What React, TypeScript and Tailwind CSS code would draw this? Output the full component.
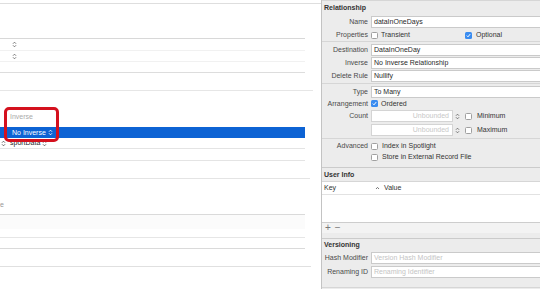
import React from "react";

function Stepper({ className = "" }: { className?: string }) {
  return (
    <svg width="5" height="7" viewBox="0 0 5 7" className={className} fill="none" stroke="currentColor" strokeWidth="0.9">
      <path d="M1 2.7 L2.5 1.2 L4 2.7" />
      <path d="M1 4.3 L2.5 5.8 L4 4.3" />
    </svg>
  );
}

function Check({ checked = false }: { checked?: boolean }) {
  if (checked) {
    return (
      <span className="w-[7px] h-[7px] rounded-[1.5px] bg-[#3a8cf0] flex items-center justify-center shrink-0">
        <svg width="5" height="5" viewBox="0 0 5 5">
          <path d="M0.8 2.6 L2 3.8 L4.2 1.1" stroke="white" strokeWidth="1" fill="none" />
        </svg>
      </span>
    );
  }
  return <span className="w-[7px] h-[7px] rounded-[1.5px] border border-[#a0a0a0] bg-white shrink-0" />;
}

function Row({ h, label, children }: { h: string; label?: string; children?: React.ReactNode }) {
  return (
    <div className={`flex items-center ${h}`}>
      <div className="w-[46px] text-right text-[#4a4a4a] shrink-0 whitespace-nowrap">{label}</div>
      <div className="ml-[3px] flex items-center">{children}</div>
    </div>
  );
}

function Field({ children, placeholder = false }: { children?: React.ReactNode; placeholder?: boolean }) {
  return (
    <div
      className={`w-[180px] h-[12px] bg-white border border-[#cacaca] flex items-center pl-[2px] whitespace-nowrap ${
        placeholder ? "text-[#c4c4c4]" : "text-[#2a2a2a]"
      }`}
    >
      {children}
    </div>
  );
}

function Sep({ dark = false }: { dark?: boolean }) {
  return <div className={`h-[1px] shrink-0 ${dark ? "bg-[#cbcbcb]" : "bg-[#d6d6d6]"}`} />;
}

function LeftPanel() {
  return (
    <div className="w-[321px] shrink-0 bg-white relative flex flex-col text-[#333]">
      <div className="h-[3px]" />
      <div className="h-[1px] bg-[#dedede]" />
      <div className="h-[34px]" />
      <div className="h-[1px] w-[305px] bg-[#d8d8d8]" />
      <div className="h-[12px] w-[305px] border-b border-[#f1f1f1] flex items-center pl-[12px] text-[#666]">
        <Stepper />
      </div>
      <div className="h-[11px] w-[305px] border-b border-[#f1f1f1] flex items-center pl-[12px] text-[#666]">
        <Stepper />
      </div>
      <div className="h-[11px] w-[305px] border-b border-[#dddddd]" />
      <div className="h-[18px] w-[313px] border-b border-[#e6e6e6]" />
      <div className="h-[36px]" />
      <div className="h-[11px] w-[305px] bg-[#0d63d4] flex items-center pl-[12px] text-white">
        <span>No Inverse</span>
        <Stepper className="ml-[2px] text-white" />
      </div>
      <div className="h-[11px] w-[305px] border-b border-[#e4e4e4] flex items-center text-[#222]">
        <Stepper className="ml-[1px] text-[#555]" />
        <span className="ml-[4px]">sportData</span>
        <Stepper className="ml-[2px] text-[#555]" />
      </div>
      <div className="h-[12px] w-[305px] border-b border-[#e4e4e4]" />
      <div className="h-[18px] w-[310px] border-b border-[#e4e4e4]" />
      <div className="h-[36px] w-[305px] border-b border-[#dadada] pt-[22px] text-[#999]">
        <span>e</span>
      </div>
      <div className="h-[14px] w-[305px] bg-[#fbfbfb]" />
      <div className="h-[9px] w-[305px] border-b border-[#e6e6e6]" />
      <div className="h-[11px] w-[305px] border-b border-[#dadada]" />
      <div className="h-[18px] w-[311px] border-b border-[#e0e0e0]" />

      <div className="absolute left-[4px] top-[107px] w-[55px] h-[35px] border-[3px] border-[#d4111e] rounded-[5px] pl-[3px] pt-[3px] text-[#aaaaaa]">
        Inverse
      </div>
    </div>
  );
}

function RightPanel() {
  return (
    <div className="flex-1 bg-[#ececec] border-l border-[#c3c3c3] flex flex-col overflow-hidden text-[#3c3c3c]">
      <Sep />
      <div className="h-[14px] flex items-center pl-[2px] font-bold text-[#333]">Relationship</div>
      <Row h="h-[14px]" label="Name">
        <Field>dataInOneDays</Field>
      </Row>
      <Row h="h-[12px]" label="Properties">
        <Check />
        <span className="ml-[3px] text-[#333] w-[84px]">Transient</span>
        <Check checked />
        <span className="ml-[4px] text-[#333]">Optional</span>
      </Row>
      <Sep />
      <div className="h-[1px]" />
      <Row h="h-[13px]" label="Destination">
        <Field>DataInOneDay</Field>
      </Row>
      <Row h="h-[13px]" label="Inverse">
        <Field>No Inverse Relationship</Field>
      </Row>
      <Row h="h-[13px]" label="Delete Rule">
        <Field>Nullify</Field>
      </Row>
      <div className="h-[1px]" />
      <Sep />
      <div className="h-[1px]" />
      <Row h="h-[13px]" label="Type">
        <Field>To Many</Field>
      </Row>
      <Row h="h-[11px]" label="Arrangement">
        <Check checked />
        <span className="ml-[3px] text-[#333]">Ordered</span>
      </Row>
      <Row h="h-[14px]" label="Count">
        <div className="w-[82px] h-[12px] bg-white border border-[#d4d4d4] flex items-center justify-end pr-[3px] text-[#c8c8c8]">
          Unbounded
        </div>
        <Stepper className="ml-[2px] text-[#666]" />
        <span className="ml-[5px] flex items-center">
          <Check />
        </span>
        <span className="ml-[5px] text-[#333]">Minimum</span>
      </Row>
      <Row h="h-[14px]">
        <div className="w-[82px] h-[12px] bg-white border border-[#d4d4d4] flex items-center justify-end pr-[3px] text-[#c8c8c8]">
          Unbounded
        </div>
        <Stepper className="ml-[2px] text-[#666]" />
        <span className="ml-[5px] flex items-center">
          <Check />
        </span>
        <span className="ml-[5px] text-[#333]">Maximum</span>
      </Row>
      <div className="h-[1px]" />
      <Sep />
      <div className="h-[1px]" />
      <Row h="h-[12px]" label="Advanced">
        <Check />
        <span className="ml-[4px] text-[#333]">Index in Spotlight</span>
      </Row>
      <Row h="h-[10px]">
        <Check />
        <span className="ml-[4px] text-[#333]">Store in External Record File</span>
      </Row>
      <div className="h-[5px]" />
      <Sep dark />
      <div className="h-[13px] flex items-center pl-[2px] font-bold text-[#333]">User Info</div>
      <Sep />
      <div className="h-[12px] bg-white flex items-center pl-[2px] text-[#333]">
        <span className="w-[51px]">Key</span>
        <svg width="5" height="4" viewBox="0 0 5 4" fill="none" stroke="#666" strokeWidth="0.9">
          <path d="M1 3 L2.5 1.4 L4 3" />
        </svg>
        <span className="ml-[4px]">Value</span>
      </div>
      <div className="h-[1px] bg-[#e2e2e2]" />
      <div className="h-[27px] bg-white" />
      <div className="h-[1px] bg-[#cdcdcd]" />
      <div className="h-[10px] bg-[#f3f3f3] flex items-center pl-[3px] text-[#777] text-[10px] leading-[10px] gap-[4px]">
        <span>+</span>
        <span>−</span>
      </div>
      <div className="h-[5px]" />
      <Sep dark />
      <div className="h-[11px] flex items-center pl-[2px] font-bold text-[#333]">Versioning</div>
      <div className="h-[1px]" />
      <Row h="h-[14px]" label="Hash Modifier">
        <Field placeholder>Version Hash Modifier</Field>
      </Row>
      <Row h="h-[14px]" label="Renaming ID">
        <Field placeholder>Renaming Identifier</Field>
      </Row>
      <div className="h-[8px]" />
      <Sep />
    </div>
  );
}

export default function App() {
  return (
    <div className="w-[540px] h-[289px] overflow-hidden flex bg-white font-['Liberation_Sans',Arial,sans-serif] text-[7px] leading-[8px]">
      <LeftPanel />
      <RightPanel />
    </div>
  );
}
